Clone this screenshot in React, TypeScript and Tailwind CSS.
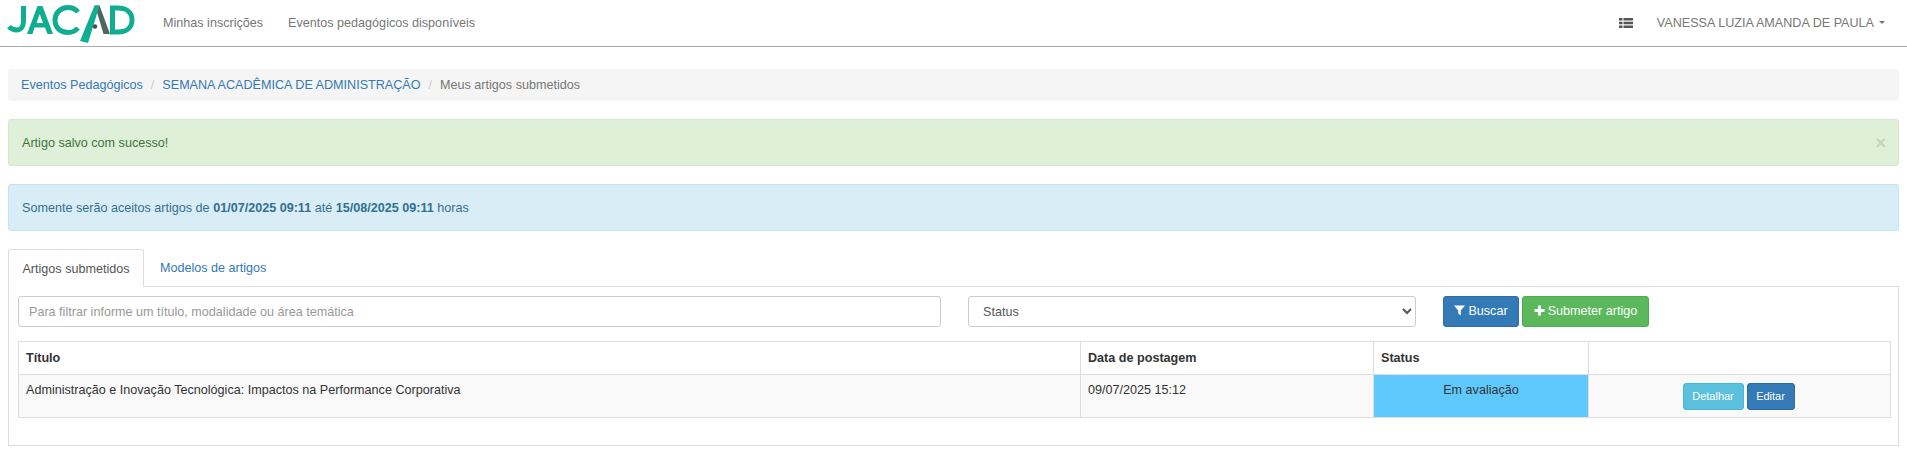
import React from "react";

function Logo() {
  return (
    <svg width="140" height="44" viewBox="0 0 140 44" className="block" aria-label="JACAD">
      <path d="M23.500 5v15.500c0 5.500-3 8.500-7 8.500c-3 0-5.500-1-7.500-3.300" fill="none" stroke="#0fae91" strokeWidth="5" />
      <path fillRule="evenodd" fill="#0fae91" d="M27 33L37.500 5H42.500L53 33H47.500L45 26.500H34.500L32.500 33ZM36.500 22H43L39.700 13Z" />
      <g fill="none" stroke="#0fae91" strokeWidth="5">
        <path d="M78 11C75.500 8 72 6.500 68 6.500C60.500 6.500 55 12 55 19C55 26.500 60.500 31.500 68 31.500C72 31.500 75.500 30 78 27" />
        <path d="M112.500 7V31H118C127 31 132 26 132 19C132 12 127 7 118 7Z" />
      </g>
      <path d="M95 4.500h4.500L110 33h-6.500Z" fill="#4f6663" />
      <path d="M94.500 4.500h5L88 42l-8-2Z" fill="#0fae91" />
      <circle cx="95" cy="25.500" r="2.200" fill="#3f4f4d" />
    </svg>
  );
}

export default function App() {
  return (
    <div className="min-h-[451px] bg-white text-[12.600px] leading-[18px] text-[#333] font-['Liberation_Sans',Arial,sans-serif]">
      <nav className="flex h-[47px] items-center border-b border-[#aaaaaa] pb-[1px] text-[#777]">
        <div className="w-[163px]"><Logo /></div>
        <span>Minhas inscrições</span>
        <span className="ml-[25px]">Eventos pedagógicos disponíveis</span>
        <svg className="ml-auto" width="14" height="12" viewBox="0 0 14 12" fill="#555">
          <path d="M0 1h3.500v2.600H0zM4.500 1H14v2.600H4.500zM0 4.700h3.500v2.600H0zM4.500 4.700H14v2.600H4.500zM0 8.400h3.500V11H0zM4.500 8.400H14V11H4.500z" />
        </svg>
        <span className="ml-[24px]">VANESSA LUZIA AMANDA DE PAULA</span>
        <span className="ml-[5px] mr-[22px] h-0 w-0 border-x-[3px] border-t-[3.500px] border-x-transparent border-t-[#777]" />
      </nav>

      <div className="px-2">
        <div className="mt-[22px] flex h-[32px] items-center rounded-[3px] bg-[#f5f5f5] px-[13px] text-[#337ab7]">
          <span>Eventos Pedagógicos</span>
          <span className="px-[8px] text-[#ccc]">/</span>
          <span>SEMANA ACADÊMICA DE ADMINISTRAÇÃO</span>
          <span className="px-[8px] text-[#ccc]">/</span>
          <span className="text-[#777]">Meus artigos submetidos</span>
        </div>

        <div className="mt-[18px] flex h-[47px] items-center justify-between rounded-[3px] border border-[#d6e9c6] bg-[#dff0d8] pl-[13px] pr-[12px] text-[#3c763d]">
          <span>Artigo salvo com sucesso!</span>
          <span className="text-[18px] font-bold leading-none text-[#3c763d] opacity-20">×</span>
        </div>

        <div className="mt-[18px] flex h-[47px] items-center rounded-[3px] border border-[#bce8f1] bg-[#d9edf7] pl-[13px] text-[#31708f]">
          <span>
            Somente serão aceitos artigos de <b>01/07/2025 09:11</b> até <b>15/08/2025 09:11</b> horas
          </span>
        </div>

        <div className="mt-[18px] flex h-[38px] border-b border-[#ddd]">
          <div className="relative z-10 flex h-[38px] w-[136px] items-center justify-center rounded-t-[3px] border border-b-0 border-[#ddd] bg-white text-[#555]">
            Artigos submetidos
          </div>
          <div className="flex h-[37px] items-center px-[16px] text-[#337ab7]">Modelos de artigos</div>
        </div>

        <div className="h-[159px] border border-t-0 border-[#ddd] px-[9px] pt-[9px]">
          <div className="flex items-start">
            <input
              readOnly
              placeholder="Para filtrar informe um título, modalidade ou área temática"
              className="h-[31px] w-[923px] rounded-[3px] border border-[#ccc] bg-white px-[10px] text-[12.600px] outline-none placeholder:text-[#999]"
            />
            <select className="ml-[27px] h-[31px] w-[448px] rounded-[3px] border border-[#ccc] bg-white px-[10px] text-[12.600px] text-[#555] outline-none">
              <option>Status</option>
            </select>
            <button className="ml-[27px] flex h-[31px] w-[76px] items-center justify-center gap-[3px] rounded-[3px] border border-[#2e6da4] bg-[#337ab7] pb-[2px] text-[12.600px] text-white">
              <svg width="11" height="11" viewBox="0 0 11 11" fill="#fff"><path d="M0 .5h11L6.800 5.500V10.500L4.200 8.500V5.500Z" /></svg>
              Buscar
            </button>
            <button className="ml-[3px] flex h-[31px] w-[127px] items-center justify-center gap-[3px] rounded-[3px] border border-[#4cae4c] bg-[#5cb85c] pb-[2px] text-[12.600px] text-white">
              <svg width="11" height="11" viewBox="0 0 11 11" fill="#fff"><path d="M4 .5h3v3.500h3.500v3H7v3.500H4V7H.5V4H4Z" /></svg>
              Submeter artigo
            </button>
          </div>

          <table className="mt-[14px] w-[1873px] table-fixed border-collapse border border-[#ddd]">
            <colgroup>
              <col className="w-[1062px]" />
              <col className="w-[293px]" />
              <col className="w-[215px]" />
              <col />
            </colgroup>
            <thead>
              <tr className="h-[33px]">
                <th className="border border-[#ddd] px-[7px] pb-[1px] text-left font-bold">Título</th>
                <th className="border border-[#ddd] px-[7px] pb-[1px] text-left font-bold">Data de postagem</th>
                <th className="border border-[#ddd] px-[7px] pb-[1px] text-left font-bold">Status</th>
                <th className="border border-[#ddd]" />
              </tr>
            </thead>
            <tbody>
              <tr className="h-[43px] bg-[#f9f9f9]">
                <td className="border border-[#ddd] px-[7px] pt-[6px] align-top">Administração e Inovação Tecnológica: Impactos na Performance Corporativa</td>
                <td className="border border-[#ddd] px-[7px] pt-[6px] align-top">09/07/2025 15:12</td>
                <td className="border border-[#ddd] bg-[#5fc9fe] px-[7px] pt-[6px] text-center align-top">Em avaliação</td>
                <td className="border border-[#ddd] pr-[2px] align-middle">
                  <div className="flex items-center justify-center gap-[3px]">
                    <button className="h-[27px] w-[61px] rounded-[3px] border border-[#46b8da] bg-[#5bc0de] text-[11px] text-white">Detalhar</button>
                    <button className="h-[27px] w-[48px] rounded-[3px] border border-[#2e6da4] bg-[#337ab7] text-[11px] text-white">Editar</button>
                  </div>
                </td>
              </tr>
            </tbody>
          </table>
        </div>
      </div>
    </div>
  );
}
